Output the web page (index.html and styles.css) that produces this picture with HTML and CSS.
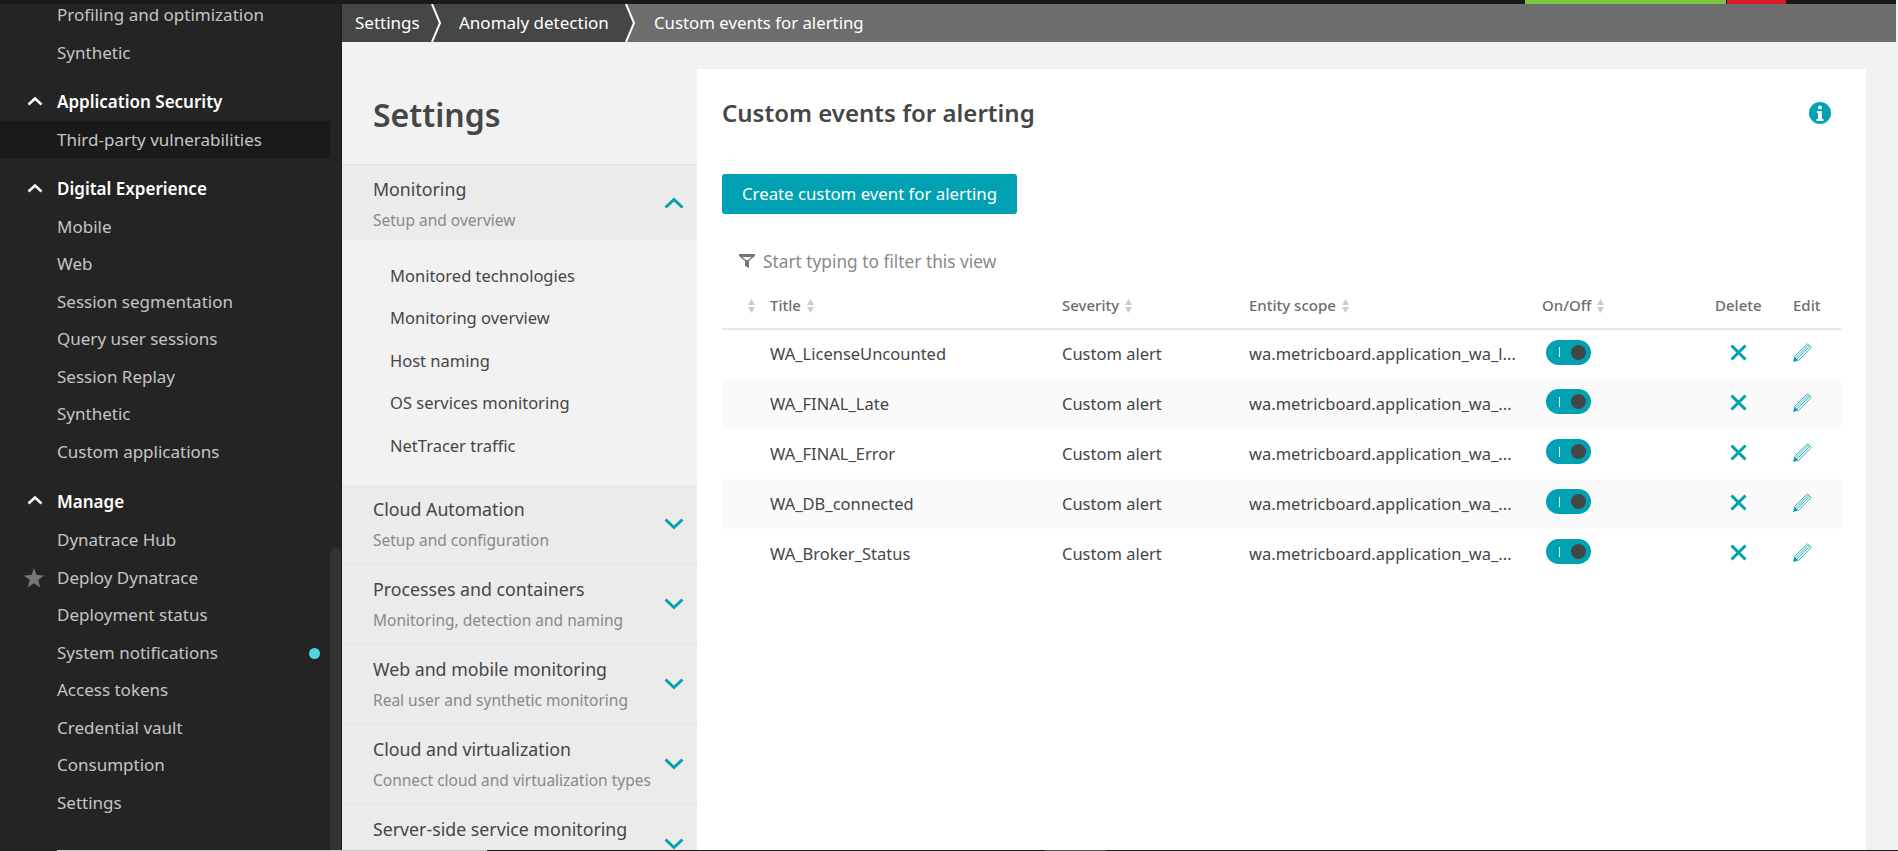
FILE: index.html
```html
<!DOCTYPE html>
<html>
  <head>
    <meta charset="utf-8">
    <title>Custom events for alerting</title>
    <link rel="stylesheet" href="styles.css">
  </head>
  <body>
    <div class="topbar">
      <div class="topbar-spacer"></div>
      <div class="health-ok"></div>
      <div class="health-bad"></div>
    </div>

    <div class="app">
      <aside class="sidebar">
        <nav class="side-nav">
          <ul class="side-group side-group-first">
            <li class="side-item">Profiling and optimization</li>
            <li class="side-item">Synthetic</li>
          </ul>
          <ul class="side-group">
            <li class="side-head"><svg class="side-caret" viewBox="0 0 16 10"><polyline points="1.5,8.5 8,2.5 14.5,8.5"/></svg>Application Security</li>
            <li class="side-item side-item-active">Third-party vulnerabilities</li>
          </ul>
          <ul class="side-group">
            <li class="side-head"><svg class="side-caret" viewBox="0 0 16 10"><polyline points="1.5,8.5 8,2.5 14.5,8.5"/></svg>Digital Experience</li>
            <li class="side-item">Mobile</li>
            <li class="side-item">Web</li>
            <li class="side-item">Session segmentation</li>
            <li class="side-item">Query user sessions</li>
            <li class="side-item">Session Replay</li>
            <li class="side-item">Synthetic</li>
            <li class="side-item">Custom applications</li>
          </ul>
          <ul class="side-group">
            <li class="side-head side-head-tall"><svg class="side-caret" viewBox="0 0 16 10"><polyline points="1.5,8.5 8,2.5 14.5,8.5"/></svg>Manage</li>
            <li class="side-item">Dynatrace Hub</li>
            <li class="side-item"><svg class="side-star" viewBox="0 0 20 20"><polygon points="10,0 12.6,7 20,7.4 14.2,12 16.2,19.5 10,15.2 3.8,19.5 5.8,12 0,7.4 7.4,7"/></svg>Deploy Dynatrace</li>
            <li class="side-item">Deployment status</li>
            <li class="side-item">System notifications<span class="side-dot"></span></li>
            <li class="side-item">Access tokens</li>
            <li class="side-item">Credential vault</li>
            <li class="side-item">Consumption</li>
            <li class="side-item">Settings</li>
          </ul>
        </nav>
        <div class="side-scroll"><div class="side-thumb"></div></div>
      </aside>

      <div class="content">
        <div class="crumbs">
          <span class="crumb">Settings</span>
          <svg class="crumb-arrow" viewBox="0 0 14 38"><polygon class="arrow-fill" points="0,0 14,0 14,38 0,38"/><polyline class="arrow-line" points="2,0 10,19 2,38"/></svg>
          <span class="crumb crumb-mid">Anomaly detection</span>
          <svg class="crumb-arrow" viewBox="0 0 14 38"><polygon class="arrow-next" points="2,0 14,0 14,38 2,38 10,19"/><polygon class="arrow-fill" points="0,0 2,0 10,19 2,38 0,38"/><polyline class="arrow-line" points="2,0 10,19 2,38"/></svg>
          <span class="crumb crumb-last">Custom events for alerting</span>
        </div>

        <div class="page">
          <section class="settings-nav">
            <h1 class="settings-title">Settings</h1>
            <div class="cat cat-open">
              <div>
                <div class="cat-name">Monitoring</div>
                <div class="cat-desc">Setup and overview</div>
              </div>
              <svg class="chev" viewBox="0 0 20 12"><polyline points="1.5,10.5 10,2.5 18.5,10.5"/></svg>
            </div>
            <ul class="sub-list">
              <li>Monitored technologies</li>
              <li>Monitoring overview</li>
              <li>Host naming</li>
              <li>OS services monitoring</li>
              <li>NetTracer traffic</li>
            </ul>
            <div class="cat">
              <div>
                <div class="cat-name">Cloud Automation</div>
                <div class="cat-desc">Setup and configuration</div>
              </div>
              <svg class="chev" viewBox="0 0 20 12"><polyline points="1.5,1.5 10,9.5 18.5,1.5"/></svg>
            </div>
            <div class="cat">
              <div>
                <div class="cat-name">Processes and containers</div>
                <div class="cat-desc">Monitoring, detection and naming</div>
              </div>
              <svg class="chev" viewBox="0 0 20 12"><polyline points="1.5,1.5 10,9.5 18.5,1.5"/></svg>
            </div>
            <div class="cat">
              <div>
                <div class="cat-name">Web and mobile monitoring</div>
                <div class="cat-desc">Real user and synthetic monitoring</div>
              </div>
              <svg class="chev" viewBox="0 0 20 12"><polyline points="1.5,1.5 10,9.5 18.5,1.5"/></svg>
            </div>
            <div class="cat">
              <div>
                <div class="cat-name">Cloud and virtualization</div>
                <div class="cat-desc">Connect cloud and virtualization types</div>
              </div>
              <svg class="chev" viewBox="0 0 20 12"><polyline points="1.5,1.5 10,9.5 18.5,1.5"/></svg>
            </div>
            <div class="cat">
              <div>
                <div class="cat-name">Server-side service monitoring</div>
              </div>
              <svg class="chev" viewBox="0 0 20 12"><polyline points="1.5,1.5 10,9.5 18.5,1.5"/></svg>
            </div>
          </section>

          <main class="panel">
            <div class="panel-head">
              <h2 class="panel-title">Custom events for alerting</h2>
              <svg class="info" viewBox="0 0 22 22"><circle class="info-bg" cx="11" cy="11" r="11"/><circle class="info-fg" cx="11" cy="5.5" r="2"/><path class="info-fg" d="M8 9h5v8h1.500v2h-7v-2H9v-6H8z"/></svg>
            </div>
            <button class="btn-create">Create custom event for alerting</button>
            <div class="filter">
              <svg class="filter-icon" viewBox="0 0 16 14"><path fill-rule="evenodd" d="M0 0h16v2l-6 5v7l-4-2V7L0 2zM3.500 3l3.500 3h2l3.500-3z"/></svg>
              Start typing to filter this view
            </div>
            <table class="events">
              <colgroup>
                <col class="col-sort"><col class="col-title"><col class="col-sev"><col class="col-scope"><col class="col-on"><col class="col-del"><col class="col-edit">
              </colgroup>
              <thead>
                <tr>
                  <th class="th-sort"><svg class="sort" viewBox="0 0 7 14"><path d="M3.500 0L7 6H0zM0 8h7l-3.500 6z"/></svg></th>
                  <th>Title<svg class="sort" viewBox="0 0 7 14"><path d="M3.500 0L7 6H0zM0 8h7l-3.500 6z"/></svg></th>
                  <th>Severity<svg class="sort" viewBox="0 0 7 14"><path d="M3.500 0L7 6H0zM0 8h7l-3.500 6z"/></svg></th>
                  <th>Entity scope<svg class="sort" viewBox="0 0 7 14"><path d="M3.500 0L7 6H0zM0 8h7l-3.500 6z"/></svg></th>
                  <th>On/Off<svg class="sort" viewBox="0 0 7 14"><path d="M3.500 0L7 6H0zM0 8h7l-3.500 6z"/></svg></th>
                  <th>Delete</th>
                  <th>Edit</th>
                </tr>
              </thead>
              <tbody>
                <tr>
                  <td></td><td>WA_LicenseUncounted</td><td>Custom alert</td><td>wa.metricboard.application_wa_l...</td>
                  <td><span class="toggle"><i class="toggle-bar"></i><i class="toggle-knob"></i></span></td>
                  <td><svg class="ico-x" viewBox="0 0 17 17"><path d="M1.500 1.500l14 14M15.500 1.500l-14 14"/></svg></td>
                  <td><svg class="ico-pen" viewBox="0 0 19 19"><path class="pen-tip" d="M0 19l1.500-5.500 4 4z"/><path class="pen-body" d="M1.500 13.500L14.500 .8l3.700 3.700L5.500 17.500M3 14.500L15.500 2M4.200 15.800L16.800 3.200"/></svg></td>
                </tr>
                <tr>
                  <td></td><td>WA_FINAL_Late</td><td>Custom alert</td><td>wa.metricboard.application_wa_...</td>
                  <td><span class="toggle"><i class="toggle-bar"></i><i class="toggle-knob"></i></span></td>
                  <td><svg class="ico-x" viewBox="0 0 17 17"><path d="M1.500 1.500l14 14M15.500 1.500l-14 14"/></svg></td>
                  <td><svg class="ico-pen" viewBox="0 0 19 19"><path class="pen-tip" d="M0 19l1.500-5.500 4 4z"/><path class="pen-body" d="M1.500 13.500L14.500 .8l3.700 3.700L5.500 17.500M3 14.500L15.500 2M4.200 15.800L16.800 3.200"/></svg></td>
                </tr>
                <tr>
                  <td></td><td>WA_FINAL_Error</td><td>Custom alert</td><td>wa.metricboard.application_wa_...</td>
                  <td><span class="toggle"><i class="toggle-bar"></i><i class="toggle-knob"></i></span></td>
                  <td><svg class="ico-x" viewBox="0 0 17 17"><path d="M1.500 1.500l14 14M15.500 1.500l-14 14"/></svg></td>
                  <td><svg class="ico-pen" viewBox="0 0 19 19"><path class="pen-tip" d="M0 19l1.500-5.500 4 4z"/><path class="pen-body" d="M1.500 13.500L14.500 .8l3.700 3.700L5.500 17.500M3 14.500L15.500 2M4.200 15.800L16.800 3.200"/></svg></td>
                </tr>
                <tr>
                  <td></td><td>WA_DB_connected</td><td>Custom alert</td><td>wa.metricboard.application_wa_...</td>
                  <td><span class="toggle"><i class="toggle-bar"></i><i class="toggle-knob"></i></span></td>
                  <td><svg class="ico-x" viewBox="0 0 17 17"><path d="M1.500 1.500l14 14M15.500 1.500l-14 14"/></svg></td>
                  <td><svg class="ico-pen" viewBox="0 0 19 19"><path class="pen-tip" d="M0 19l1.500-5.500 4 4z"/><path class="pen-body" d="M1.500 13.500L14.500 .8l3.700 3.700L5.500 17.500M3 14.500L15.500 2M4.200 15.800L16.800 3.200"/></svg></td>
                </tr>
                <tr>
                  <td></td><td>WA_Broker_Status</td><td>Custom alert</td><td>wa.metricboard.application_wa_...</td>
                  <td><span class="toggle"><i class="toggle-bar"></i><i class="toggle-knob"></i></span></td>
                  <td><svg class="ico-x" viewBox="0 0 17 17"><path d="M1.500 1.500l14 14M15.500 1.500l-14 14"/></svg></td>
                  <td><svg class="ico-pen" viewBox="0 0 19 19"><path class="pen-tip" d="M0 19l1.500-5.500 4 4z"/><path class="pen-body" d="M1.500 13.500L14.500 .8l3.700 3.700L5.500 17.500M3 14.500L15.500 2M4.200 15.800L16.800 3.200"/></svg></td>
                </tr>
              </tbody>
            </table>
          </main>
        </div>
      </div>
    </div>

    <div class="bottom-strip">
      <div class="strip-dark"></div>
      <div class="strip-light"></div>
      <div class="strip-black"></div>
      <div class="strip-gray"></div>
    </div>
  </body>
</html>
```

FILE: styles.css
```css
* {
    box-sizing: border-box;
}

html, body {
    height: 100%;
}

body {
    margin: 0;
    display: flex;
    flex-direction: column;
    overflow: hidden;
    background: #f2f2f2;
    color: #454646;
    font-family: "Noto Sans", "Liberation Sans", sans-serif;
    font-size: 16.500px;
}

ul {
    list-style: none;
    margin: 0;
    padding: 0;
}

/* top health strip */
.topbar {
    display: flex;
    height: 4px;
    flex: none;
    background: #1a1a1a;
    margin-right: 2px;
}

.topbar-spacer {
    width: 1525px;
}

.health-ok {
    width: 201px;
    background: #7dc540;
    margin-right: 1px;
}

.health-bad {
    width: 59px;
    background: #dc172a;
}

.app {
    flex: 1;
    min-height: 0;
    display: flex;
}

/* left navigation */
.sidebar {
    width: 342px;
    flex: none;
    display: flex;
    background: #242424;
    border-right: 1px solid #1a1a1a;
    overflow: hidden;
    font-size: 17px;
}

.side-nav {
    flex: 1;
    min-width: 0;
}

.side-group {
    margin-bottom: 11px;
}

.side-group-first {
    margin-top: -8px;
}

.side-item,
.side-head {
    height: 37.5px;
    display: flex;
    align-items: center;
    padding-left: 57px;
    position: relative;
    color: #c5c5c5;
}

.side-head {
    height: 38.5px;
    color: #fff;
    font-weight: 600;
}

.side-head-tall {
    height: 40px;
}

.side-item-active {
    background: #1a1a1a;
}

.side-caret {
    position: absolute;
    left: 27px;
    top: 14px;
    width: 16px;
    height: 10px;
    fill: none;
    stroke: #fff;
    stroke-width: 2.5;
}

.side-star {
    position: absolute;
    left: 24px;
    top: 9px;
    width: 20px;
    height: 20px;
    fill: #777;
}

.side-dot {
    position: absolute;
    left: 309px;
    top: 14px;
    width: 11px;
    height: 11px;
    border-radius: 50%;
    background: #4fd5e0;
}

.side-scroll {
    width: 11px;
    flex: none;
    padding-top: 544px;
}

.side-thumb {
    height: 400px;
    background: #333;
    border-radius: 5px 5px 0 0;
}

/* breadcrumb */
.content {
    flex: 1;
    min-width: 0;
    display: flex;
    flex-direction: column;
}

.crumbs {
    display: flex;
    flex: none;
    height: 38px;
    margin-right: 2px;
    background: #6d6d6d;
    color: #fff;
    font-size: 17px;
}

.crumb {
    display: flex;
    align-items: center;
    width: 88px;
    padding: 0 0 2px 13px;
    background: #454646;
}

.crumb-mid {
    width: 180px;
    padding-left: 15px;
}

.crumb-last {
    width: auto;
    background: none;
    padding-left: 16px;
    font-size: 16.800px;
}

.crumb-arrow {
    width: 14px;
    height: 38px;
    flex: none;
}

.arrow-fill {
    fill: #454646;
}

.arrow-next {
    fill: #6d6d6d;
}

.arrow-line {
    fill: none;
    stroke: #fff;
    stroke-width: 2;
}

.page {
    flex: 1;
    min-height: 0;
    display: flex;
}

/* settings menu */
.settings-nav {
    width: 355px;
    flex: none;
    overflow: hidden;
}

.settings-title {
    margin: 0;
    height: 122px;
    padding: 50px 0 0 31px;
    font-size: 32px;
    line-height: 46px;
    font-weight: 600;
}

.cat {
    height: 80px;
    display: flex;
    align-items: flex-start;
    justify-content: space-between;
    padding: 12px 13px 0 31px;
    background: #ebebeb;
    border-bottom: 1px solid #e4e4e4;
}

.cat-open {
    height: 76px;
    border-top: 1px solid #e4e4e4;
    border-bottom: none;
}

.cat-name {
    font-size: 17.750px;
    line-height: 24px;
}

.cat-desc {
    margin-top: 9px;
    font-size: 15.500px;
    line-height: 20px;
    color: #898989;
}

.chev {
    width: 20px;
    height: 12px;
    margin-top: 21px;
    fill: none;
    stroke: #00a1b2;
    stroke-width: 3;
}

.cat-open .chev {
    margin-top: 20px;
}

.sub-list {
    padding: 15px 0 17px 48px;
}

.sub-list li {
    height: 42.5px;
    padding-bottom: 2px;
    display: flex;
    align-items: center;
}

/* main panel */
.panel {
    flex: 1;
    min-width: 0;
    margin: 27px 32px 0 0;
    padding: 0 25px;
    background: #fff;
}

.panel-head {
    display: flex;
    align-items: center;
    justify-content: space-between;
    height: 88px;
    padding: 0 10px 0 0;
}

.panel-title {
    margin: 0 0 2px;
    font-size: 24px;
    font-weight: 600;
}

.info {
    width: 22px;
    height: 22px;
}

.info-bg {
    fill: #00a1b2;
}

.info-fg {
    fill: #fff;
}

.btn-create {
    display: block;
    width: 295px;
    height: 40px;
    margin-top: 17px;
    padding: 0 0 2px;
    border: none;
    border-radius: 3px;
    background: #00a1b2;
    color: #fff;
    font: inherit;
    font-size: 16.800px;
}

.filter {
    display: flex;
    align-items: center;
    gap: 8px;
    height: 30px;
    margin-top: 32px;
    padding-left: 17px;
    color: #898989;
    font-size: 17.300px;
}

.filter-icon {
    width: 16px;
    height: 14px;
    fill: #777;
}

.events {
    width: 100%;
    margin-top: 12px;
    table-layout: fixed;
    border-collapse: collapse;
}

.col-sort { width: 48px; }
.col-title { width: 292px; }
.col-sev { width: 187px; }
.col-scope { width: 293px; }
.col-on { width: 173px; }
.col-del { width: 78px; }

.events th,
.events td {
    padding: 0;
    text-align: left;
    white-space: nowrap;
    overflow: hidden;
}

.events th {
    height: 41px;
    padding-bottom: 7px;
    font-size: 15px;
    font-weight: 500;
    color: #6d6d6d;
    border-bottom: 2px solid #e6e6e6;
}

.events td {
    height: 50px;
}

.events td:nth-child(-n+4) {
    padding-bottom: 2px;
}

.events tbody tr:nth-child(even) {
    background: #fafafa;
}

.th-sort {
    text-align: right;
}

.sort {
    width: 7px;
    height: 14px;
    margin-left: 6px;
    vertical-align: -2px;
    fill: #ccc;
}

.th-sort .sort {
    margin-left: 26px;
}

.toggle {
    display: flex;
    align-items: center;
    width: 45px;
    height: 25px;
    margin: 0 0 5px 4px;
    padding: 0 5px 0 13px;
    justify-content: space-between;
    border-radius: 13px;
    background: #00a1b2;
}

.toggle-bar {
    width: 1px;
    height: 10px;
    background: #fff;
}

.toggle-knob {
    width: 15px;
    height: 15px;
    border-radius: 50%;
    background: #454646;
}

.ico-x {
    display: block;
    width: 17px;
    height: 17px;
    margin: 0 0 4px 15px;
    fill: none;
    stroke: #00a1b2;
    stroke-width: 3;
}

.ico-pen {
    display: block;
    width: 19px;
    height: 19px;
    margin-bottom: 4px;
}

.pen-tip {
    fill: #00a1b2;
}

.pen-body {
    fill: none;
    stroke: #00a1b2;
    stroke-width: .8;
}

/* last pixel row of the capture */
.bottom-strip {
    display: flex;
    flex: none;
    height: 1px;
    background: #1a1a1a;
}

.strip-dark {
    width: 57px;
    background: #242424;
}

.strip-light {
    width: 430px;
    background: #c8c8c8;
}

.strip-black {
    width: 558px;
}

.strip-gray {
    width: 61px;
    background: #555;
}
```
